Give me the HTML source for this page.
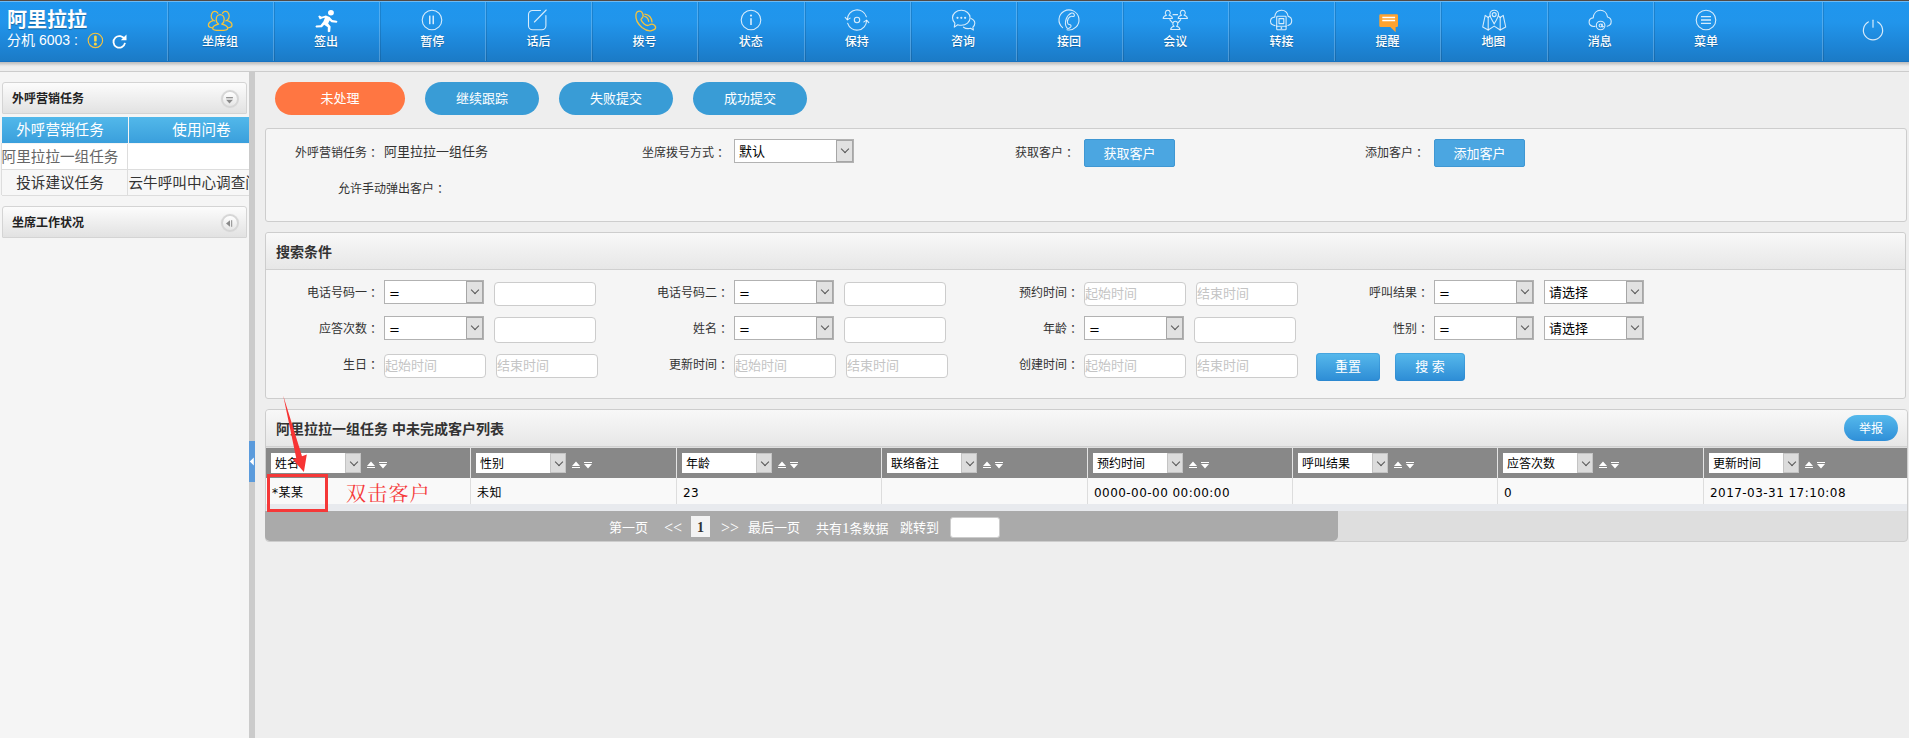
<!DOCTYPE html>
<html lang="zh-CN">
<head>
<meta charset="utf-8">
<title>阿里拉拉</title>
<style>
*{box-sizing:border-box;margin:0;padding:0}
html,body{width:1909px;height:738px;overflow:hidden}
body{position:relative;background:#eee;font-family:"Liberation Sans","Noto Sans CJK SC",sans-serif;font-size:12px;color:#333}
.abs{position:absolute}
/* header */
#hd{position:absolute;left:0;top:0;width:1909px;height:62px;background:linear-gradient(#1f96ee 0%,#2195eb 35%,#1d84d5 75%,#1b7ac5 100%);border-top:1px solid #524a44;box-shadow:inset 0 1px 0 rgba(255,255,255,.35),inset 0 -1px 0 #1672c2;z-index:5}
#hd .sep{position:absolute;top:1px;height:59px;width:1px;background:rgba(255,255,255,.22);box-shadow:1px 0 0 rgba(0,0,0,.13)}
#hd .it{position:absolute;top:0;width:106px;height:60px;text-align:center;color:#fff;font-size:12px;font-weight:500}
#hd .it span{position:absolute;left:0;width:106px;top:33.200px;line-height:16px;text-shadow:0 1px 1px rgba(0,0,0,.25)}
#hd .it svg{position:absolute;left:39px;top:5px;width:28px;height:28px;overflow:visible}
#logo{position:absolute;left:7px;top:6.300px;font-size:20px;font-weight:bold;color:#fff;line-height:26px;letter-spacing:0;text-shadow:0 1px 1px rgba(0,0,0,.3)}
#ext{position:absolute;left:7px;top:30.300px;font-size:14px;color:#fff;line-height:18px}
/* band under header */
#band{position:absolute;left:0;top:62px;width:1909px;height:10px;background:linear-gradient(to bottom,#bebebe 0,#c4c4c4 1px,#d0d0d0 2px,#dfdfdf 3px,#e9e9e9 4px,#eee 5px);border-bottom:1px solid #ccc}
/* sidebar */
#side{position:absolute;left:0;top:72px;width:249px;height:666px;background:#f5f5f5}
#split{position:absolute;left:249px;top:72px;width:6px;height:666px;background:#cbcbcb}
#grip{position:absolute;left:249px;top:441px;width:6px;height:41px;background:#5b9bdc}
.ph{position:absolute;left:2px;width:245px;height:32px;border:1px solid #d4d4d4;border-radius:3px 3px 1px 1px;background:linear-gradient(#fcfcfc,#e2e2e2);font-weight:bold;font-size:12px;line-height:30px;padding:1px 0 0 9px;color:#222}
.ph i{position:absolute;right:7.500px;top:7.300px;width:18px;height:18px;border-radius:50%;border:2px solid #d6d6d6;background:linear-gradient(#fff,#e6e6e6);box-shadow:0 0 1px #ddd}
.ph i svg{left:-.500px !important;top:-.500px !important}
#stab{position:absolute;left:2px;top:117px;width:247px;height:79px;overflow:hidden;font-size:14.600px}
#stab span{position:absolute;top:0;text-align:center;white-space:nowrap}
#stab div{position:absolute;height:26px;line-height:26px;white-space:nowrap;overflow:hidden;text-align:center;color:#333}
/* main */
.pill{position:absolute;top:82px;height:33px;border-radius:17px;color:#fff;font-size:13px;line-height:34px;text-align:center;background:#399cd6}
.panel{position:absolute;left:265px;width:1642px;border:1px solid #cdcdcd;border-radius:3px;background:#f5f5f5}
.pt{position:absolute;left:0;top:0;width:100%;border-bottom:1px solid #d0d0d0;background:linear-gradient(#f8f8f8,#e7e7e7);border-radius:3px 3px 0 0;font-weight:bold;font-size:13px;color:#333;padding-left:10px}
.lb{position:absolute;font-size:12px;line-height:16px;text-align:right;white-space:nowrap;color:#333}
.sel{position:absolute;height:24px;border:1px solid #b2b2b2;background:#fff;font-size:13px;line-height:24px;padding-left:4px;color:#000;overflow:hidden}
.eq{font-family:"DejaVu Sans",sans-serif;padding-left:4px;line-height:25px}
.sel b{position:absolute;right:0;top:0;width:17px;height:22px;background:#e1e1e1;border:1px solid #a6a6a6;font-weight:normal}
.th b{height:20px;width:16px;background:#dcdcdc;border-color:#c4c4c4}
.th b:after{left:4px;top:3px;width:5px;height:5px;border-color:#555}
.lb s{position:relative;top:1px;text-decoration:none;font-family:"Noto Sans CJK JP",sans-serif}
.td{position:absolute;top:483.500px;font-family:"DejaVu Sans","Noto Sans CJK SC",sans-serif;font-size:12px;letter-spacing:.45px;line-height:18px;color:#000;white-space:nowrap}
.sel b:after{content:"";position:absolute;left:4.500px;top:4.500px;width:5px;height:5px;border-right:1px solid #555;border-bottom:1px solid #555;transform:rotate(45deg)}
.inp{position:absolute;height:24px;width:102px;border:1px solid #ccc;border-radius:4px;background:#fff;font-size:13px;line-height:22px;color:#c4c4c4;padding-left:0;white-space:nowrap;overflow:hidden}
.btn{position:absolute;color:#fff;text-align:center;font-size:13px}
</style>
</head>
<body>
<div id="hd">
<div id="logo">阿里拉拉</div>
<div id="ext">分机 6003 :</div>
<svg class="abs" style="left:86px;top:30px" width="44" height="20" viewBox="0 0 44 20"><circle cx="9.400" cy="9.400" r="7.200" fill="none" stroke="#f6c33c" stroke-width="1.100"/><rect x="8.100" y="4.400" width="2.600" height="6.200" rx="1.200" fill="#f8d648"/><circle cx="9.400" cy="13" r="1.500" fill="#f8d648"/><path d="M38.600 8.500a5.800 5.800 0 1 0 .4 3.400" fill="none" stroke="#fff" stroke-width="1.800"/><path d="M40.500 3.500v5.700h-5.700z" fill="#fff"/></svg>
<div class="sep" style="left:167px"></div>
<div class="sep" style="left:273px"></div>
<div class="sep" style="left:379px"></div>
<div class="sep" style="left:485px"></div>
<div class="sep" style="left:591px"></div>
<div class="sep" style="left:697px"></div>
<div class="sep" style="left:804px"></div>
<div class="sep" style="left:910px"></div>
<div class="sep" style="left:1016px"></div>
<div class="sep" style="left:1122px"></div>
<div class="sep" style="left:1228px"></div>
<div class="sep" style="left:1334px"></div>
<div class="sep" style="left:1440px"></div>
<div class="sep" style="left:1547px"></div>
<div class="sep" style="left:1653px"></div>
<div class="sep" style="left:1822px"></div>
<div class="it" style="left:167.0px"><svg viewBox="0 0 28 28"><g fill="none" stroke="#f6c33c" stroke-width="1.300" stroke-linejoin="round" stroke-linecap="round">
<path d="M11.800 7.200A3.700 4.700 0 1 0 8.600 14.800"/>
<path d="M16.600 7.200A3.700 4.700 0 1 1 19.800 14.800"/>
<path d="M7 14.600c-2.700.900-4.600 2.500-4.600 4.500c0 1.700 1.500 2.600 4.200 2.800"/>
<path d="M21.400 14.600c2.700.900 4.600 2.500 4.600 4.500c0 1.700-1.500 2.600-4.200 2.800"/>
<path d="M14.200 8.600c2.300 0 4 2.100 4 4.900c0 2.100-1 3.800-2.400 4.600c3.400.700 5.900 2.200 5.900 4.300c0 1.700-3.300 2-7.500 2s-7.500-.300-7.500-2c0-2.100 2.500-3.600 5.900-4.300c-1.400-.800-2.400-2.500-2.400-4.600c0-2.800 1.700-4.900 4-4.900z"/></g></svg><span>坐席组</span></div>
<div class="it" style="left:273.1px"><svg viewBox="0 0 28 28"><g fill="#fff" stroke="none" transform="translate(15.400 0) scale(1.080 1) translate(-14 0)">
<circle cx="17.300" cy="6.800" r="2.700"/>
<path d="M5.500 10.300l1.100-.9l2.200 1.300l3.800-1.200l3.400 1.400l2.600 3.100l3.900.7l.9 1.100l-.9.900l-4.700-.5l-1.800-1.600l-1.300 2.900l2.300 2.900l-.4 5.300l-1.400.5l-.9-.8l.1-4.100l-3.400-2.600l-2.100 2.500l-5.300.4l-.7-1.100l.7-1l4-.3l2.700-3.600l1.400-3.800l-2.100.5l-2.600 1.200z"/></g></svg><span>签出</span></div>
<div class="it" style="left:379.3px"><svg viewBox="0 0 28 28"><g fill="none" stroke="rgba(255,255,255,.82)" stroke-width="1.100"><circle cx="14" cy="14" r="9.800"/></g><g fill="rgba(255,255,255,.82)"><rect x="11" y="9.600" width="1.500" height="8.600"/><rect x="14.500" y="9.600" width="1.500" height="8.600"/></g></svg><span>暂停</span></div>
<div class="it" style="left:485.4px"><svg viewBox="0 0 28 28"><g fill="none" stroke="rgba(255,255,255,.82)" stroke-width="1.100" stroke-linecap="round"><path d="M16.500 4.500h-8a4 4 0 0 0-4 4v11.300a4 4 0 0 0 4 4h9.400a4 4 0 0 0 4-4v-10.300"/><path d="M22.200 4l-11.800 12"/></g></svg><span>话后</span></div>
<div class="it" style="left:591.5px"><svg viewBox="0 0 28 28"><g fill="none" stroke="#f6c33c" stroke-width="1.300" stroke-linejoin="round" stroke-linecap="round">
<path d="M8.700 5.200C7 5.200 5.200 6.500 4.900 9C4.500 13 7 18 11 21.500C14.500 24.300 18 25.200 20.500 24.600C23 24 24.800 22.500 24.600 21C24.300 19.800 22.500 18.400 21 18.100C19.500 17.900 18.300 19.300 16.800 19.500C14.500 19.600 11 16.500 10 13.800C9.800 12.800 11.200 12.200 11.800 11C12.300 9.800 12 7.500 11 6.300C10.400 5.600 9.600 5.200 8.700 5.200Z"/>
<path d="M13.700 10.300c2.200.6 3.600 2.400 4 5"/><path d="M13.900 8.100c4 .6 6.600 3.500 7.100 7.700"/></g></svg><span>拨号</span></div>
<div class="it" style="left:697.7px"><svg viewBox="0 0 28 28"><g fill="none" stroke="rgba(255,255,255,.82)" stroke-width="1.100"><circle cx="14" cy="14" r="9.800"/></g><g fill="rgba(255,255,255,.82)"><rect x="13.200" y="12.200" width="1.600" height="6.800"/><circle cx="14" cy="9.600" r="1.100"/></g></svg><span>状态</span></div>
<div class="it" style="left:803.8px"><svg viewBox="0 0 28 28"><g fill="none" stroke="rgba(255,255,255,.82)" stroke-width="1.100" stroke-linecap="round" stroke-linejoin="round">
<path d="M4.400 13.500a9.700 9.700 0 0 1 19-2.700"/><path d="M23.600 14.500a9.700 9.700 0 0 1-19 2.700"/>
<path d="M2.200 11.300l2.200 2.600l2.700-1.800"/><path d="M25.800 16.700l-2.200-2.600l-2.700 1.800"/>
<circle cx="14" cy="14" r="2.700"/></g></svg><span>保持</span></div>
<div class="it" style="left:910.0px"><svg viewBox="0 0 28 28"><g fill="none" stroke="rgba(255,255,255,.82)" stroke-width="1.100" stroke-linejoin="round" stroke-linecap="round">
<path d="M12.300 4.300c4.900 0 8.800 3.300 8.800 7.500s-3.900 7.500-8.800 7.500c-1.300 0-2.500-.2-3.600-.6l-3.400 2.400l.6-4c-1.500-1.400-2.400-3.200-2.400-5.300c0-4.200 3.900-7.500 8.800-7.500z"/>
<path d="M22 12.500c2.300.9 3.800 2.700 3.800 4.800c0 1.500-.7 2.800-1.900 3.800l.5 2.900l-2.900-1.700c-.8.200-1.600.300-2.400.300c-1.800 0-3.400-.5-4.600-1.400"/></g>
<g fill="rgba(255,255,255,.82)"><circle cx="8.500" cy="11.800" r="1.100"/><circle cx="12.300" cy="11.800" r="1.100"/><circle cx="16.100" cy="11.800" r="1.100"/></g></svg><span>咨询</span></div>
<div class="it" style="left:1016.1px"><svg viewBox="0 0 28 28"><g fill="none" stroke="rgba(255,255,255,.82)" stroke-width="1.100" stroke-linecap="round" stroke-linejoin="round">
<path d="M7.600 21.600a10 10 0 1 1 4.400 2.100"/>
<path d="M16.500 7.100C14.500 8 12.300 10 11.200 13C10 16.300 10.300 19.500 11.800 21.700C12.500 22.700 13.800 22.600 14.800 21.800L15.800 20.800C16.300 20.100 16 19.200 15.200 18.700C14.500 18.300 13.600 18.600 13.200 18.200C12.300 17 12.300 14.500 13.300 12.600C14 11.300 15.200 10.400 16.400 10.200C17 10.100 17.500 10.800 18.400 10.500C19.300 10.200 19.600 9.300 19.300 8.500C18.900 7.300 17.600 6.600 16.500 7.100Z"/></g></svg><span>接回</span></div>
<div class="it" style="left:1122.2px"><svg viewBox="0 0 28 28"><g fill="none" stroke="rgba(255,255,255,.82)" stroke-width="1.100" stroke-linejoin="round"><path d="M6.8 4.268a2.4640000000000004 2.688 0 0 1 1.2320000000000002 5.040000000000001c2.128 0.56 3.3600000000000003 1.6800000000000002 3.3600000000000003 3.248h-9.184c0 -1.568 1.2320000000000002 -2.688 3.3600000000000003 -3.248a2.4640000000000004 2.688 0 0 1 1.2320000000000002 -5.040000000000001z"/><path d="M21.8 4.268a2.4640000000000004 2.688 0 0 1 1.2320000000000002 5.040000000000001c2.128 0.56 3.3600000000000003 1.6800000000000002 3.3600000000000003 3.248h-9.184c0 -1.568 1.2320000000000002 -2.688 3.3600000000000003 -3.248a2.4640000000000004 2.688 0 0 1 1.2320000000000002 -5.040000000000001z"/><path d="M14.3 15.268a2.4640000000000004 2.688 0 0 1 1.2320000000000002 5.040000000000001c2.128 0.56 3.3600000000000003 1.6800000000000002 3.3600000000000003 3.248h-9.184c0 -1.568 1.2320000000000002 -2.688 3.3600000000000003 -3.248a2.4640000000000004 2.688 0 0 1 1.2320000000000002 -5.040000000000001z"/>
<path d="M11.600 8.600h5.400M8.600 13.300l3 3.600M20 13.300l-3 3.600"/></g></svg><span>会议</span></div>
<div class="it" style="left:1228.4px"><svg viewBox="0 0 28 28"><g fill="none" stroke="rgba(255,255,255,.82)" stroke-width="1.100" stroke-linejoin="round" stroke-linecap="round">
<path d="M8 19.600c-2.700-.3-4.500-2-4.500-4.300c0-2.400 1.800-4 4.200-4.200c.5-4 3.200-6.800 6.800-6.800c3.400 0 6.100 2.500 6.700 6.100c2.100.5 3.500 2.200 3.500 4.400c0 2.300-1.500 4.100-3.800 4.700"/>
<rect x="9.700" y="10.200" width="9.400" height="13.600" rx=".8"/><rect x="12" y="12.600" width="4.800" height="5"/><path d="M9.700 20.300h9.400"/></g><circle cx="14.400" cy="22" r=".9" fill="rgba(255,255,255,.82)"/></svg><span>转接</span></div>
<div class="it" style="left:1334.5px"><svg viewBox="0 0 28 28"><path d="M6.500 8.200h16.300a1.200 1.200 0 0 1 1.200 1.200v10.400a1.200 1.200 0 0 1-1.200 1.200h-1.200v5.200l-5.300-5.200h-9.800a1.200 1.200 0 0 1-1.200-1.200v-10.400a1.200 1.200 0 0 1 1.200-1.200z" fill="#ffa32f"/><path d="M8.300 11.500h12.800M8.300 14.500h12.800" stroke="#fff" stroke-width="1.300" fill="none"/></svg><span>提醒</span></div>
<div class="it" style="left:1440.6px"><svg viewBox="0 0 28 28"><g fill="none" stroke="rgba(255,255,255,.82)" stroke-width="1.100" stroke-linejoin="round" stroke-linecap="round">
<path d="M14.200 4.200c2.500 0 4.300 1.900 4.300 4.300c0 3-2.500 5.800-4.300 9.400c-1.800-3.600-4.300-6.400-4.300-9.400c0-2.400 1.800-4.300 4.300-4.300z"/><circle cx="14.200" cy="8.600" r="2"/>
<path d="M10 9.800l-1.800 1.700l-3-2.100l-2.500 11.600l5.500 3l6-3.900l6 3.900l5.500-3l-2.500-11.600l-3 2.100l-1.800-1.700"/>
<path d="M8.200 11.500v12.500M20.200 11.500v12.500"/></g></svg><span>地图</span></div>
<div class="it" style="left:1546.8px"><svg viewBox="0 0 28 28"><g fill="none" stroke="rgba(255,255,255,.82)" stroke-width="1.100" stroke-linejoin="round" stroke-linecap="round">
<path d="M9 20.400c-.5.100-.9.100-1.300.1c-2.600 0-4.600-1.900-4.600-4.300c0-2.300 1.700-4.100 4.100-4.300c.5-4.400 3.400-7.600 7.200-7.600c3.600 0 6.500 2.800 7.100 6.700c2.200.5 3.700 2.300 3.700 4.600c0 2.400-1.700 4.300-4.100 4.600"/>
<circle cx="14.600" cy="19.500" r="4.300"/><circle cx="14.600" cy="19.500" r="1.500"/><path d="M16.100 18v2.200c0 .8 1 .9 1.400.3"/></g></svg><span>消息</span></div>
<div class="it" style="left:1652.9px"><svg viewBox="0 0 28 28"><g fill="none" stroke="rgba(255,255,255,.82)" stroke-width="1.100"><circle cx="14" cy="14" r="9.800"/></g><g fill="none" stroke="rgba(255,255,255,.82)" stroke-width="1.300"><path d="M9 10.600h10M9 14h10M9 17.400h10"/></g></svg><span>菜单</span></div>
<svg class="abs" style="left:1859px;top:15px" width="28" height="28" viewBox="0 0 28 28"><g fill="none" stroke="rgba(255,255,255,.82)" stroke-width="1.200" stroke-linecap="round"><path d="M9.300 5.900a9.600 9.600 0 1 0 9.400 0"/><path d="M14 4.200v7"/></g></svg>
</div>
<div id="band"></div>
<div id="side"></div>
<div class="ph" style="top:82px">外呼营销任务<i><svg width="15" height="15" viewBox="0 0 15 15" style="position:absolute;left:0;top:0"><path d="M4.100 5.700h6.800" stroke="#8a8a8a" stroke-width="1.200" fill="none"/><path d="M4.100 7.800h6.800l-3.400 3.600z" fill="#8a8a8a"/></svg></i></div>
<div id="stab">
<div style="left:0;top:0;width:126px;height:26px;line-height:27px;background:linear-gradient(#52b8ea,#3a9fdc);color:#fff"><span style="left:-10px;width:136px">外呼营销任务</span></div>
<div style="left:127px;top:0;width:120px;height:26px;line-height:27px;background:linear-gradient(#52b8ea,#3a9fdc);color:#fff"><span style="left:-1px;width:147px">使用问卷</span></div>
<div style="left:0;top:27px;width:126px;background:#fff;border-bottom:1px solid #ddd;border-right:1px solid #ddd;color:#666"><span style="left:-10px;width:136px">阿里拉拉一组任务</span></div>
<div style="left:126px;top:27px;width:121px;background:#fff;border-bottom:1px solid #ddd"></div>
<div style="left:0;top:53px;width:126px;background:#f7f7f7;border-bottom:1px solid #ddd;border-right:1px solid #ddd"><span style="left:-10px;width:136px">投诉建议任务</span></div>
<div style="left:126px;top:53px;width:121px;background:#f7f7f7;border-bottom:1px solid #ddd"><span style="left:0;width:147px">云牛呼叫中心调查问卷</span></div>
</div>
<div class="abs sideline" style="left:1px;top:143px;width:1px;height:52px;background:#ddd"></div>
<div class="ph" style="top:206px">坐席工作状况<i><svg width="15" height="15" viewBox="0 0 15 15" style="position:absolute;left:0;top:0"><path d="M8 4.200v6.600l-4-3.300z" fill="#8a8a8a"/><path d="M9.700 4.200v6.600" stroke="#8a8a8a" stroke-width="1" fill="none"/></svg></i></div>
<div id="split"></div>
<div id="grip"></div>
<div id="main">
<div class="pill" style="left:275px;width:130px;background:#ff7642">未处理</div>
<div class="pill" style="left:425px;width:114px">继续跟踪</div>
<div class="pill" style="left:559px;width:114px">失败提交</div>
<div class="pill" style="left:693px;width:114px">成功提交</div>
<div class="panel" style="top:128px;height:94px;width:1642px"></div>
<div class="lb" style="right:1530px;top:144px;">外呼营销任务<s lang="ja">：</s></div>
<div class="lb" style="left:384px;top:144px;font-size:13px">阿里拉拉一组任务</div>
<div class="lb" style="right:1463px;top:180px;">允许手动弹出客户<s lang="ja">：</s></div>
<div class="lb" style="right:1183px;top:144px;">坐席拨号方式<s lang="ja">：</s></div>
<div class="sel" style="left:734px;top:139px;width:120px;height:24px">默认<b style="height:22px"></b></div>
<div class="lb" style="right:834px;top:144px;">获取客户<s lang="ja">：</s></div>
<div class="btn" style="left:1084px;top:139px;width:91px;height:28px;line-height:27px;background:#4ba6e1;border:1px solid #3f97d3;border-radius:2px">获取客户</div>
<div class="lb" style="right:484px;top:144px;">添加客户<s lang="ja">：</s></div>
<div class="btn" style="left:1434px;top:139px;width:91px;height:28px;line-height:27px;background:#4ba6e1;border:1px solid #3f97d3;border-radius:2px">添加客户</div>
<div class="panel" style="top:232px;height:167px;width:1641px"><div class="pt" style="height:37px;line-height:38px;font-size:14px">搜索条件</div></div>
<div class="lb" style="right:1530px;top:284px;">电话号码一<s lang="ja">：</s></div>
<div class="sel eq" style="left:384px;top:280px;width:100px;height:24px">=<b style="height:22px"></b></div>
<div class="inp" style="left:494px;top:282px;width:102px;height:24px;line-height:22px"></div>
<div class="lb" style="right:1180px;top:284px;">电话号码二<s lang="ja">：</s></div>
<div class="sel eq" style="left:734px;top:280px;width:100px;height:24px">=<b style="height:22px"></b></div>
<div class="inp" style="left:844px;top:282px;width:102px;height:24px;line-height:22px"></div>
<div class="lb" style="right:830px;top:284px;">预约时间<s lang="ja">：</s></div>
<div class="inp" style="left:1084px;top:282px;width:102px;height:24px;line-height:22px">起始时间</div>
<div class="inp" style="left:1196px;top:282px;width:102px;height:24px;line-height:22px">结束时间</div>
<div class="lb" style="right:480px;top:284px;">呼叫结果<s lang="ja">：</s></div>
<div class="sel eq" style="left:1434px;top:280px;width:100px;height:24px">=<b style="height:22px"></b></div>
<div class="sel" style="left:1544px;top:280px;width:100px;height:24px">请选择<b style="height:22px"></b></div>
<div class="lb" style="right:1530px;top:320px;">应答次数<s lang="ja">：</s></div>
<div class="sel eq" style="left:384px;top:316px;width:100px;height:24px">=<b style="height:22px"></b></div>
<div class="inp" style="left:494px;top:317px;width:102px;height:26px;line-height:24px"></div>
<div class="lb" style="right:1180px;top:320px;">姓名<s lang="ja">：</s></div>
<div class="sel eq" style="left:734px;top:316px;width:100px;height:24px">=<b style="height:22px"></b></div>
<div class="inp" style="left:844px;top:317px;width:102px;height:26px;line-height:24px"></div>
<div class="lb" style="right:830px;top:320px;">年龄<s lang="ja">：</s></div>
<div class="sel eq" style="left:1084px;top:316px;width:100px;height:24px">=<b style="height:22px"></b></div>
<div class="inp" style="left:1194px;top:317px;width:102px;height:26px;line-height:24px"></div>
<div class="lb" style="right:480px;top:320px;">性别<s lang="ja">：</s></div>
<div class="sel eq" style="left:1434px;top:316px;width:100px;height:24px">=<b style="height:22px"></b></div>
<div class="sel" style="left:1544px;top:316px;width:100px;height:24px">请选择<b style="height:22px"></b></div>
<div class="lb" style="right:1530px;top:356px;">生日<s lang="ja">：</s></div>
<div class="inp" style="left:384px;top:354px;width:102px;height:24px;line-height:22px">起始时间</div>
<div class="inp" style="left:496px;top:354px;width:102px;height:24px;line-height:22px">结束时间</div>
<div class="lb" style="right:1180px;top:356px;">更新时间<s lang="ja">：</s></div>
<div class="inp" style="left:734px;top:354px;width:102px;height:24px;line-height:22px">起始时间</div>
<div class="inp" style="left:846px;top:354px;width:102px;height:24px;line-height:22px">结束时间</div>
<div class="lb" style="right:830px;top:356px;">创建时间<s lang="ja">：</s></div>
<div class="inp" style="left:1084px;top:354px;width:102px;height:24px;line-height:22px">起始时间</div>
<div class="inp" style="left:1196px;top:354px;width:102px;height:24px;line-height:22px">结束时间</div>
<div class="btn" style="left:1316px;top:353px;width:64px;height:28px;line-height:28px;background:linear-gradient(#57b9ec,#2d8cd5);border-radius:4px;box-shadow:0 0 0 1px rgba(40,130,200,.35) inset">重置</div>
<div class="btn" style="left:1395px;top:353px;width:70px;height:28px;line-height:28px;background:linear-gradient(#57b9ec,#2d8cd5);border-radius:4px;box-shadow:0 0 0 1px rgba(40,130,200,.35) inset">搜 索</div>
<div class="panel" style="top:409px;height:133px;border-radius:4px;width:1643px;background:#dedede"><div class="pt" style="height:37px;line-height:38px;font-size:14px">阿里拉拉一组任务 中未完成客户列表</div></div>
<div class="btn" style="left:1844px;top:415px;width:54px;height:26px;line-height:28px;font-size:12px;border-radius:13px;background:linear-gradient(#55b9ec,#2f8fd8)">举报</div>
<div class="abs" style="left:266px;top:448px;width:1641px;height:30px;background:#888"></div>
<div class="abs" style="left:266px;top:478px;width:1641px;height:26px;background:#f9f9f9"></div>
<div class="abs" style="left:266px;top:504px;width:1641px;height:7px;background:#e8eaee"></div>
<div class="sel th" style="left:271px;top:453px;width:90px;height:20px;line-height:22px;font-size:12px;border:0">姓名<b></b></div>
<svg class="abs" style="left:366px;top:460px" width="24" height="10" viewBox="0 0 24 10"><path d="M1 6l4-4.500l4 4.500zM1 7h8v1h-8zM13 2h8v1h-8zM13 4h8l-4 4.500z" fill="#fff"/></svg>
<div class="td" style="left:272px">*某某</div>
<div class="abs" style="left:470px;top:448px;width:1px;height:30px;background:#e4e4e4"></div>
<div class="abs" style="left:470px;top:478px;width:1px;height:26px;background:#ddd"></div>
<div class="sel th" style="left:476px;top:453px;width:90px;height:20px;line-height:22px;font-size:12px;border:0">性别<b></b></div>
<svg class="abs" style="left:571px;top:460px" width="24" height="10" viewBox="0 0 24 10"><path d="M1 6l4-4.500l4 4.500zM1 7h8v1h-8zM13 2h8v1h-8zM13 4h8l-4 4.500z" fill="#fff"/></svg>
<div class="td" style="left:477px">未知</div>
<div class="abs" style="left:676px;top:448px;width:1px;height:30px;background:#e4e4e4"></div>
<div class="abs" style="left:676px;top:478px;width:1px;height:26px;background:#ddd"></div>
<div class="sel th" style="left:682px;top:453px;width:90px;height:20px;line-height:22px;font-size:12px;border:0">年龄<b></b></div>
<svg class="abs" style="left:777px;top:460px" width="24" height="10" viewBox="0 0 24 10"><path d="M1 6l4-4.500l4 4.500zM1 7h8v1h-8zM13 2h8v1h-8zM13 4h8l-4 4.500z" fill="#fff"/></svg>
<div class="td" style="left:683px">23</div>
<div class="abs" style="left:881px;top:448px;width:1px;height:30px;background:#e4e4e4"></div>
<div class="abs" style="left:881px;top:478px;width:1px;height:26px;background:#ddd"></div>
<div class="sel th" style="left:887px;top:453px;width:90px;height:20px;line-height:22px;font-size:12px;border:0">联络备注<b></b></div>
<svg class="abs" style="left:982px;top:460px" width="24" height="10" viewBox="0 0 24 10"><path d="M1 6l4-4.500l4 4.500zM1 7h8v1h-8zM13 2h8v1h-8zM13 4h8l-4 4.500z" fill="#fff"/></svg>
<div class="td" style="left:888px"></div>
<div class="abs" style="left:1087px;top:448px;width:1px;height:30px;background:#e4e4e4"></div>
<div class="abs" style="left:1087px;top:478px;width:1px;height:26px;background:#ddd"></div>
<div class="sel th" style="left:1093px;top:453px;width:90px;height:20px;line-height:22px;font-size:12px;border:0">预约时间<b></b></div>
<svg class="abs" style="left:1188px;top:460px" width="24" height="10" viewBox="0 0 24 10"><path d="M1 6l4-4.500l4 4.500zM1 7h8v1h-8zM13 2h8v1h-8zM13 4h8l-4 4.500z" fill="#fff"/></svg>
<div class="td" style="left:1094px">0000-00-00 00:00:00</div>
<div class="abs" style="left:1292px;top:448px;width:1px;height:30px;background:#e4e4e4"></div>
<div class="abs" style="left:1292px;top:478px;width:1px;height:26px;background:#ddd"></div>
<div class="sel th" style="left:1298px;top:453px;width:90px;height:20px;line-height:22px;font-size:12px;border:0">呼叫结果<b></b></div>
<svg class="abs" style="left:1393px;top:460px" width="24" height="10" viewBox="0 0 24 10"><path d="M1 6l4-4.500l4 4.500zM1 7h8v1h-8zM13 2h8v1h-8zM13 4h8l-4 4.500z" fill="#fff"/></svg>
<div class="td" style="left:1299px"></div>
<div class="abs" style="left:1497px;top:448px;width:1px;height:30px;background:#e4e4e4"></div>
<div class="abs" style="left:1497px;top:478px;width:1px;height:26px;background:#ddd"></div>
<div class="sel th" style="left:1503px;top:453px;width:90px;height:20px;line-height:22px;font-size:12px;border:0">应答次数<b></b></div>
<svg class="abs" style="left:1598px;top:460px" width="24" height="10" viewBox="0 0 24 10"><path d="M1 6l4-4.500l4 4.500zM1 7h8v1h-8zM13 2h8v1h-8zM13 4h8l-4 4.500z" fill="#fff"/></svg>
<div class="td" style="left:1504px">0</div>
<div class="abs" style="left:1703px;top:448px;width:1px;height:30px;background:#e4e4e4"></div>
<div class="abs" style="left:1703px;top:478px;width:1px;height:26px;background:#ddd"></div>
<div class="sel th" style="left:1709px;top:453px;width:90px;height:20px;line-height:22px;font-size:12px;border:0">更新时间<b></b></div>
<svg class="abs" style="left:1804px;top:460px" width="24" height="10" viewBox="0 0 24 10"><path d="M1 6l4-4.500l4 4.500zM1 7h8v1h-8zM13 2h8v1h-8zM13 4h8l-4 4.500z" fill="#fff"/></svg>
<div class="td" style="left:1710px">2017-03-31 17:10:08</div>
<div class="abs" style="left:265px;top:511px;width:1073px;height:30px;background:#aaa;border-radius:0 0 5px 5px"></div>
<div class="abs" style="left:609px;top:518.500px;font-size:13px;line-height:18px;color:#fff;white-space:nowrap">第一页</div>
<div class="abs" style="left:748px;top:518.500px;font-size:13px;line-height:18px;color:#fff;white-space:nowrap">最后一页</div>
<div class="abs" style="left:816px;top:518.500px;font-size:13px;line-height:18px;color:#fff;white-space:nowrap">共有<span style="font-family:'Liberation Serif',serif;font-size:15px">1</span>条数据</div>
<div class="abs" style="left:900px;top:518.500px;font-size:13px;line-height:18px;color:#fff;white-space:nowrap">跳转到</div>
<div class="abs" style="left:664px;top:519px;font-family:'Liberation Serif',serif;font-size:16px;line-height:18px;color:#fff;white-space:nowrap">&lt;&lt;</div>
<div class="abs" style="left:721px;top:519px;font-family:'Liberation Serif',serif;font-size:16px;line-height:18px;color:#fff;white-space:nowrap">&gt;&gt;</div>
<div class="abs" style="left:691px;top:516px;width:19px;height:21px;background:#f3f3f3;color:#333;font-weight:bold;font-size:14px;line-height:23.500px;text-align:center;font-family:'Liberation Serif',serif">1</div>
<div class="abs" style="left:950px;top:517px;width:50px;height:21px;background:#fff;border:1px solid #ccc;border-radius:3px"></div>
<svg class="abs" style="left:270px;top:385px;z-index:9" width="60" height="100" viewBox="270 385 60 100"><path d="M283.200 395.400L302 456.300L306.800 454.500L303.900 472.100L292.600 459.300L296.200 458.100z" fill="#f73434"/></svg>
<div class="abs" style="left:267px;top:474px;width:61px;height:38px;border:3px solid #f53838;z-index:9"></div>
<div class="abs" style="left:346px;top:481px;font-family:'Liberation Serif','Noto Serif CJK SC',serif;font-weight:400;font-size:20px;line-height:26px;color:#f53838;letter-spacing:1.200px;z-index:9">双击客户</div>
<svg class="abs" style="left:249px;top:441px;z-index:9" width="6" height="41" viewBox="0 0 6 41"><path d="M4.800 16.500v8l-4-4z" fill="#fff"/></svg>
</div>
</body>
</html>
